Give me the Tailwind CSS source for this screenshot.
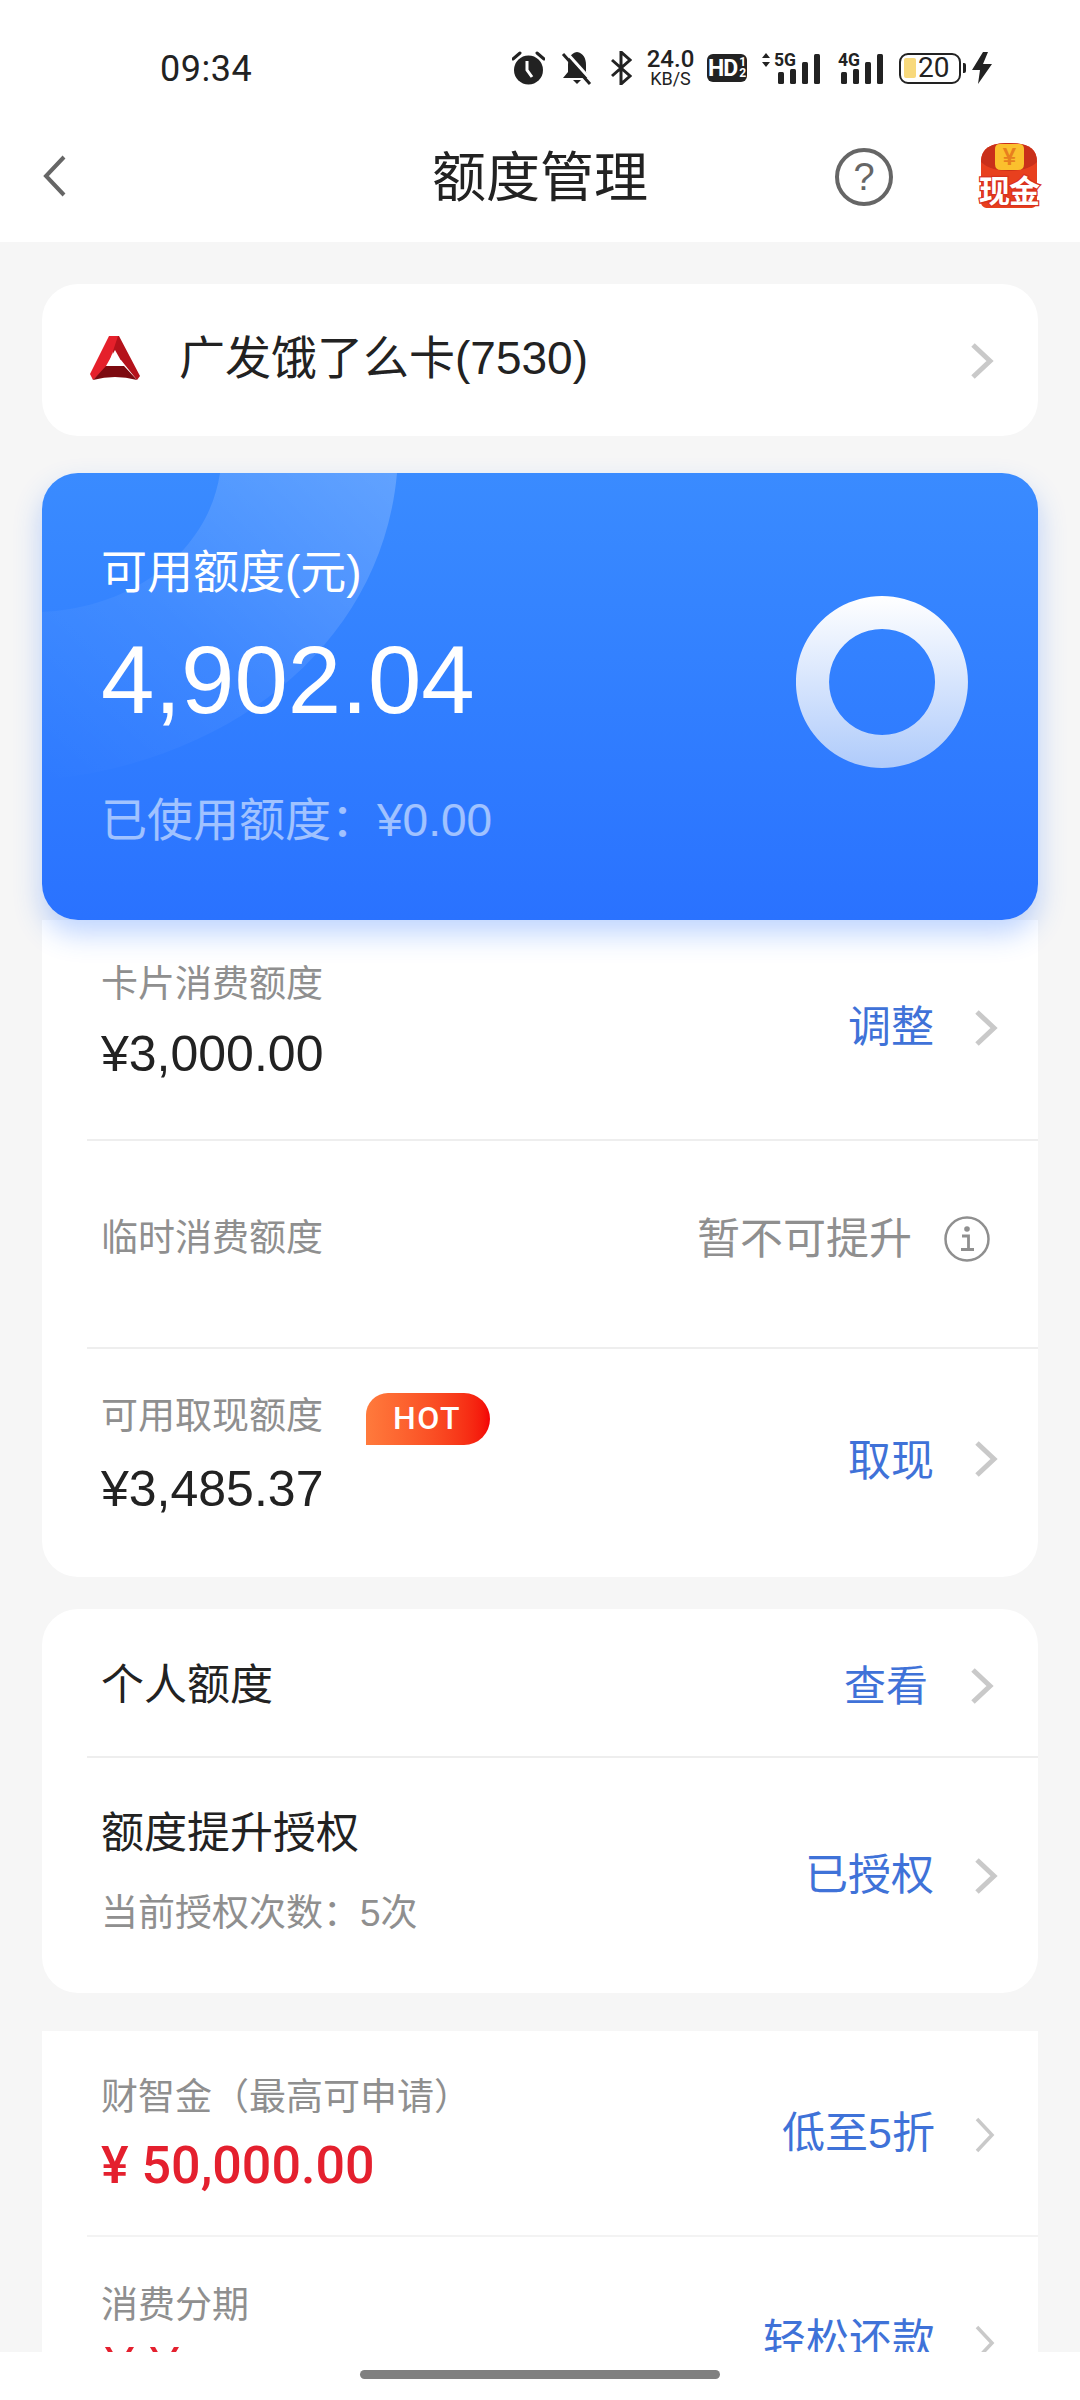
<!DOCTYPE html>
<html lang="zh-CN">
<head>
  <meta charset="UTF-8" />
  <meta name="viewport" content="width=device-width, initial-scale=1.0"/>
  <title>额度管理</title>
  <script src="https://cdn.jsdelivr.net/npm/@tailwindcss/browser@4"></script>
</head>
<body class="bg-[#f6f6f6]">
<div class="relative w-[1080px] h-[2400px] overflow-hidden bg-[#f6f6f6] text-[#222] font-['Liberation_Sans','Noto_Sans_CJK_SC',sans-serif]">

  <!-- status bar + nav -->
  <header class="h-[242px] bg-white">
    <div class="h-[136px] flex items-center pl-[160px] pr-[88px] justify-between">
      <span class="text-[36px] font-['Roboto'] tracking-[0.5px] mt-[2px]">09:34</span>
      <div class="flex items-center h-[40px] font-['Roboto']">
        <svg class="w-[33px] h-[34px]" viewBox="0 0 33 34">
          <path d="M1 8 L8 2 M32 8 L25 2" stroke="#222" stroke-width="3" stroke-linecap="round"/>
          <circle cx="16.5" cy="19" r="14.5" fill="#222"/>
          <path d="M15 10 V19 L20 26" stroke="#fff" stroke-width="3" fill="none"/>
        </svg>
        <svg class="w-[32px] h-[34px] ml-[16px]" viewBox="0 0 32 34">
          <path d="M16 1 C10 2 7 7 7 14 V21 L2 27 H26 L28 27 L25 21 V14 C25 7 22 2 16 1Z M12 29 H20 L16 33Z" fill="#222"/>
          <path d="M5 1 L31 30" stroke="#fff" stroke-width="3"/>
          <path d="M2 3 L29 33" stroke="#222" stroke-width="3"/>
        </svg>
        <svg class="w-[21px] h-[34px] ml-[18px]" viewBox="0 0 21 34">
          <path d="M1 9 L19 25 L10 33 V1 L19 9 L1 25" fill="none" stroke="#222" stroke-width="3"/>
        </svg>
        <div class="w-[49px] ml-[14px] flex flex-col items-center">
          <span class="text-[24px] font-medium leading-[17px]">24.0</span>
          <span class="text-[18px] leading-[14px] mt-[4px]">KB/S</span>
        </div>
        <div class="w-[40px] h-[28px] ml-[12px] rounded-[6px] bg-[#222] text-white flex items-center justify-center font-bold text-[23px] tracking-[-1px] leading-none">HD<span class="text-[12px] leading-[11px] ml-[1px] w-[8px] flex flex-col items-center"><span>1</span><span>2</span></span></div>
        <!-- signal 5G -->
        <svg class="w-[62px] h-[34px] ml-[13px] overflow-visible" viewBox="0 0 62 34">
          <path d="M6 2 L10 7 H2Z M6 16 L10 11 H2Z" fill="#222"/>
          <text x="14" y="15" font-size="18" font-weight="700" fill="#222" textLength="22" lengthAdjust="spacingAndGlyphs">5G</text>
          <rect x="18" y="21" width="6" height="12" rx="1.5" fill="#222"/>
          <rect x="30" y="18" width="6" height="15" rx="1.5" fill="#222"/>
          <rect x="42" y="11" width="6" height="22" rx="1.5" fill="#222"/>
          <rect x="54" y="3" width="6" height="30" rx="1.5" fill="#222"/>
        </svg>
        <!-- signal 4G -->
        <svg class="w-[46px] h-[34px] ml-[16px] overflow-visible" viewBox="0 0 46 34">
          <text x="0" y="15" font-size="18" font-weight="700" fill="#222" textLength="22" lengthAdjust="spacingAndGlyphs">4G</text>
          <rect x="3" y="21" width="6" height="12" rx="1.5" fill="#222"/>
          <rect x="15" y="18" width="6" height="15" rx="1.5" fill="#222"/>
          <rect x="27" y="11" width="6" height="22" rx="1.5" fill="#222"/>
          <rect x="39" y="3" width="6" height="30" rx="1.5" fill="#222"/>
        </svg>
        <!-- battery -->
        <div class="relative w-[62px] h-[31px] ml-[15px] rounded-[9px] border-[2.5px] border-[#222] flex items-center pl-[3px]">
          <div class="w-[12px] h-[20px] bg-[#f8d97c] rounded-[2px]"></div>
          <span class="text-[28px] leading-none ml-[2px]">20</span>
        </div>
        <div class="w-[3px] h-[10px] bg-[#222] ml-[2px] rounded-r-[2px]"></div>
        <svg class="w-[20px] h-[32px] ml-[6px]" viewBox="0 0 20 32"><path d="M11 0 L0 18 H8 L6 32 L20 12 H11 L16 0Z" fill="#222"/></svg>
      </div>
    </div>
    <div class="relative h-[82px] flex items-center justify-center">
      <svg class="absolute left-[40px] top-[18px] w-[28px] h-[44px]" viewBox="0 0 28 44"><path d="M24 3 L6 22 L24 41" fill="none" stroke="#666" stroke-width="4"/></svg>
      <h1 class="text-[54px] leading-none font-normal mt-[1px]">额度管理</h1>
      <div class="absolute left-[835px] top-[12px] w-[58px] h-[58px] rounded-full border-[4px] border-[#666] flex items-center justify-center text-[38px] leading-none text-[#666]">?</div>
      <svg class="absolute left-[975px] top-[4px] w-[68px] h-[72px]" viewBox="0 0 68 72">
        <path d="M6 22 C6 8 16 3 34 3 C52 3 62 8 62 22 V62 C62 66 59 68 55 68 H13 C9 68 6 66 6 62Z" fill="#e8401e"/>
        <path d="M6 22 C6 8 16 3 34 3 C52 3 62 8 62 22 C50 34 18 34 6 22Z" fill="#c9301a"/>
        <path d="M20 9 Q20 4 25 4 H44 Q49 4 49 9 V24 Q49 30 43 30 H26 Q20 30 20 24Z" fill="#fbc02d"/>
        <text x="34.500" y="25" font-size="24" font-weight="700" fill="#e8801e" text-anchor="middle">¥</text>
        <text x="34" y="62" font-size="31" font-weight="700" fill="#fff" stroke="#d9301e" stroke-width="2.5" paint-order="stroke" text-anchor="middle" letter-spacing="-1">现金</text>
      </svg>
    </div>
  </header>

  <main class="px-[42px] pt-[42px]">
    <!-- card picker -->
    <div class="h-[152px] bg-white rounded-[36px] flex items-center pl-[48px] pr-[44px]">
      <svg class="w-[50px] h-[44px] mb-[4px]" viewBox="0 0 50 44">
        <path d="M19 0 H29 L50 40 L47 44 L31 24 H24Z" fill="#b5121b"/>
        <path d="M19 0 H28 L18 30 L3 44 L0 38Z" fill="#e5202b"/>
        <path d="M16 30 H34 L47 44 Q25 38 3 44Z" fill="#7d0a10"/>
        <path d="M25 14 L34 30 H16Z" fill="#fff"/>
      </svg>
      <span class="text-[46px] leading-none ml-[39px] mb-[4px]">广发饿了么卡(7530)</span>
      <svg class="w-[24px] h-[38px] ml-auto mt-[2px]" viewBox="0 0 24 38"><path d="M3 3 L20 19 L3 35" fill="none" stroke="#c9c9c9" stroke-width="5"/></svg>
    </div>

    <!-- blue limit card -->
    <div class="relative z-10 mt-[37px] h-[447px] rounded-[36px] overflow-hidden bg-linear-to-b from-[#3a8bff] to-[#2a72ff] shadow-[0_14px_28px_rgba(42,115,255,0.3)] flex justify-between pl-[59px] pr-[70px] text-white" >
      <svg class="absolute left-0 top-0 w-[360px] h-[310px]" viewBox="0 0 360 310">
        <defs><linearGradient id="arc" x1="1" y1="0" x2="0" y2="1"><stop offset="0" stop-color="#fff" stop-opacity=".2"/><stop offset="0.55" stop-color="#fff" stop-opacity=".06"/><stop offset="1" stop-color="#fff" stop-opacity="0"/></linearGradient></defs>
        <path d="M178 0 C166 80 90 135 0 139 V307 C190 290 340 170 355 0Z" fill="url(#arc)"/>
      </svg>
      <div class="relative pt-[69px]">
        <p class="text-[46px] leading-[60px]">可用额度(元)</p>
        <p class="text-[96px] leading-[120px] mt-[18px]">4,902.04</p>
        <p class="text-[46px] leading-[60px] mt-[50px] text-white/55">已使用额度：¥0.00</p>
      </div>
      <svg class="relative w-[172px] h-[172px] mt-[123px]" viewBox="0 0 172 172">
        <defs><linearGradient id="ring" x1="0" y1="0" x2="0" y2="1"><stop offset="0" stop-color="#fff"/><stop offset="1" stop-color="#afcbfb"/></linearGradient></defs>
        <path fill-rule="evenodd" d="M86 0 A86 86 0 1 1 85.9 0Z M86 33 A53 53 0 1 0 86.1 33Z" fill="url(#ring)"/>
      </svg>
    </div>

    <!-- limits -->
    <div class="h-[657px] bg-white rounded-b-[36px] pl-[45px]">
      <div class="h-[221px] border-b-2 border-[#eeeeee] flex justify-between pl-[14px] pr-[40px]">
        <div class="pt-[35px]">
          <p class="text-[37px] leading-[60px] text-[#8f8f8f]">卡片消费额度</p>
          <p class="text-[50px] leading-[78px]">¥3,000.00</p>
        </div>
        <div class="flex items-center pb-[4px]">
          <span class="text-[43px] text-[#3f72d8]">调整</span>
          <svg class="w-[24px] h-[38px] ml-[40px]" viewBox="0 0 24 38"><path d="M3 3 L20 19 L3 35" fill="none" stroke="#c9c9c9" stroke-width="5"/></svg>
        </div>
      </div>
      <div class="h-[208px] border-b-2 border-[#eeeeee] flex items-center justify-between pl-[14px] pr-[48px] pb-[10px]">
        <p class="text-[37px] text-[#8f8f8f]">临时消费额度</p>
        <div class="flex items-center">
          <span class="text-[43px] text-[#8f8f8f]">暂不可提升</span>
          <svg class="w-[46px] h-[46px] ml-[32px]" viewBox="0 0 46 46">
            <circle cx="23" cy="23" r="21.5" fill="none" stroke="#8f8f8f" stroke-width="2.5"/>
            <circle cx="23" cy="13" r="2.8" fill="#8f8f8f"/>
            <path d="M18 20 H24.5 V33 M17 33.5 H30" fill="none" stroke="#8f8f8f" stroke-width="2.8"/>
          </svg>
        </div>
      </div>
      <div class="h-[228px] flex justify-between pl-[14px] pr-[40px]">
        <div class="pt-[38px]">
          <div class="flex items-center h-[60px]">
            <p class="text-[37px] leading-[60px] text-[#8f8f8f]">可用取现额度</p>
            <span class="ml-[43px] mt-[4px] w-[124px] h-[52px] rounded-tl-[22px] rounded-r-[26px] bg-linear-to-r from-[#ff7a3c] to-[#f40006] text-white font-['Roboto'] font-medium text-[32px] tracking-[1.500px] flex items-center justify-center pb-[2px] pr-[2px]">HOT</span>
          </div>
          <p class="text-[50px] leading-[78px] mt-[3px]">¥3,485.37</p>
        </div>
        <div class="flex items-center pb-[4px]">
          <span class="text-[43px] text-[#3f72d8]">取现</span>
          <svg class="w-[24px] h-[38px] ml-[40px] mb-[4px]" viewBox="0 0 24 38"><path d="M3 3 L20 19 L3 35" fill="none" stroke="#c9c9c9" stroke-width="5"/></svg>
        </div>
      </div>
    </div>

    <!-- personal -->
    <div class="mt-[32px] h-[384px] bg-white rounded-[36px] pl-[45px]">
      <div class="h-[149px] border-b-2 border-[#eeeeee] flex items-center justify-between pl-[14px] pr-[44px]">
        <p class="text-[43px] pt-[6px]">个人额度</p>
        <div class="flex items-center pt-[7px]">
          <span class="text-[42px] text-[#3f72d8]">查看</span>
          <svg class="w-[24px] h-[38px] ml-[42px]" viewBox="0 0 24 38"><path d="M3 3 L20 19 L3 35" fill="none" stroke="#c9c9c9" stroke-width="5"/></svg>
        </div>
      </div>
      <div class="h-[235px] flex justify-between pl-[14px] pr-[40px]">
        <div class="pt-[40px]">
          <p class="text-[43px] leading-[70px]">额度提升授权</p>
          <p class="text-[37px] leading-[60px] mt-[16px] text-[#8f8f8f]">当前授权次数：5次</p>
        </div>
        <div class="flex items-center">
          <span class="text-[43px] text-[#3f72d8]">已授权</span>
          <svg class="w-[24px] h-[38px] ml-[40px]" viewBox="0 0 24 38"><path d="M3 3 L20 19 L3 35" fill="none" stroke="#c9c9c9" stroke-width="5"/></svg>
        </div>
      </div>
    </div>

    <!-- offers -->
    <div class="mt-[38px] h-[400px] bg-white pl-[45px]">
      <div class="h-[206px] border-b-2 border-[#f3f3f3] flex justify-between pl-[14px] pr-[42px]">
        <div class="pt-[37px]">
          <p class="text-[37px] leading-[60px] text-[#8f8f8f]">财智金（最高可申请）</p>
          <p class="text-[52px] leading-[76px] font-['Roboto'] font-medium text-[#e4202e]">¥ 50,000.00</p>
        </div>
        <div class="flex items-center">
          <span class="text-[43px] text-[#3f72d8]">低至5折</span>
          <svg class="w-[22px] h-[38px] ml-[39px] mt-[3px]" viewBox="0 0 22 38"><path d="M3 3 L18 19 L3 35" fill="none" stroke="#c9c9c9" stroke-width="3.5"/></svg>
        </div>
      </div>
      <div class="h-[194px] flex justify-between pl-[14px] pr-[42px]">
        <div class="pt-[39px]">
          <p class="text-[37px] leading-[60px] text-[#8f8f8f]">消费分期</p>
          <p class="text-[52px] leading-[60px] mt-[-1px] pl-[4px] tracking-[16px] text-[#e4202e]">¥¥</p>
        </div>
        <div class="flex items-center pt-[12px]">
          <span class="text-[43px] text-[#3f72d8]">轻松还款</span>
          <svg class="w-[22px] h-[38px] ml-[39px] mt-[6px]" viewBox="0 0 22 38"><path d="M3 3 L18 19 L3 35" fill="none" stroke="#c9c9c9" stroke-width="3.5"/></svg>
        </div>
      </div>
    </div>
  </main>

  <!-- gesture bar -->
  <div class="absolute left-0 right-0 bottom-0 z-20 h-[48px] bg-white flex justify-center pt-[18px]">
    <div class="w-[360px] h-[9px] rounded-full bg-[#808080]"></div>
  </div>
</div>
</body>
</html>
